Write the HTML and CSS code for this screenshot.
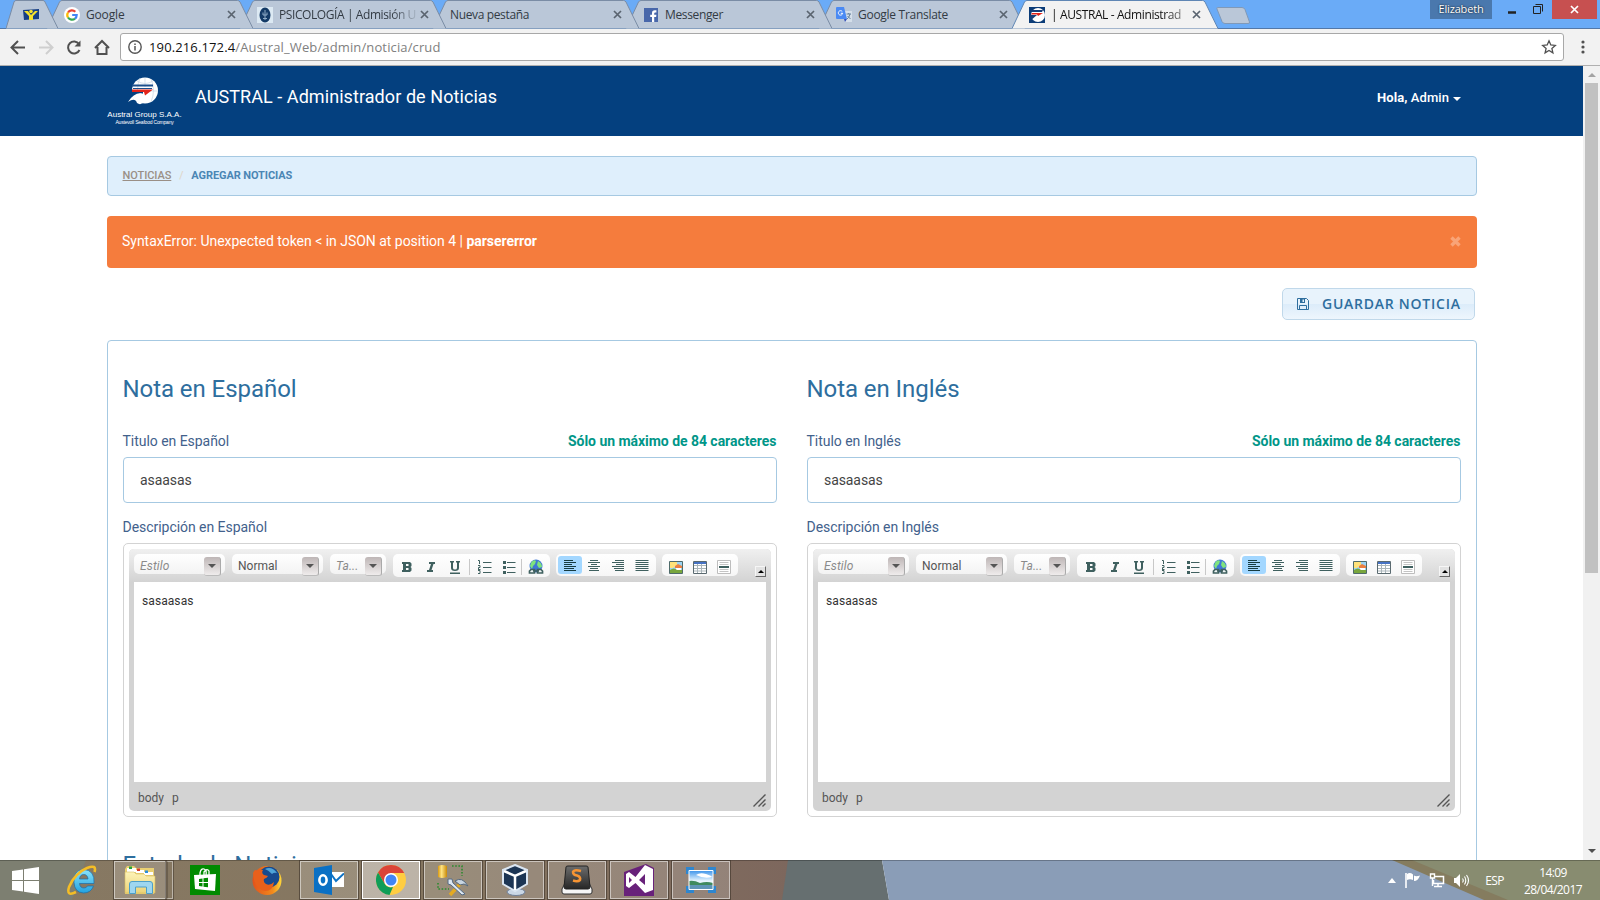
FILE: index.html
```html
<!DOCTYPE html>
<html lang="es">
<head>
<meta charset="utf-8">
<title>AUSTRAL - Administrador de Noticias</title>
<link rel="stylesheet" href="styles.css">
</head>
<body>
<svg class="defs" width="0" height="0">
  <defs>
    <linearGradient id="gold" x1="0" x2="1" y1="0" y2="0"><stop offset="0" stop-color="#d99a12"/><stop offset=".4" stop-color="#ffe483"/><stop offset="1" stop-color="#c98a08"/></linearGradient>
    <linearGradient id="iegrad" x1="0" x2="0" y1="0" y2="1"><stop offset="0" stop-color="#8be4fb"/><stop offset="1" stop-color="#22a2e0"/></linearGradient>
    <linearGradient id="folder" x1="0" x2="0" y1="0" y2="1"><stop offset="0" stop-color="#fdf3b8"/><stop offset="1" stop-color="#ecd377"/></linearGradient>
    <linearGradient id="sky" x1="0" x2="0" y1="0" y2="1"><stop offset="0" stop-color="#3b93ea"/><stop offset=".55" stop-color="#e8f5fd"/><stop offset="1" stop-color="#e8f5fd"/></linearGradient>
    <linearGradient id="key" x1="0" x2="0" y1="0" y2="1"><stop offset="0" stop-color="#6d6d6d"/><stop offset="1" stop-color="#262626"/></linearGradient>
    <linearGradient id="fox" x1="0" x2="1" y1="0" y2="0"><stop offset="0" stop-color="#e2521b"/><stop offset=".7" stop-color="#f28a1c"/><stop offset="1" stop-color="#ffd83b"/></linearGradient>
  </defs>
  <symbol id="tabshape" viewBox="0 0 206 29" preserveAspectRatio="none"><path d="M0 28.5L12.5 2Q13.5 .5 15 .5H190.500Q192 .5 193 2L206 28.500" /></symbol>
  <symbol id="x" viewBox="0 0 9 9"><path d="M1 1L8 8M8 1L1 8" stroke="#5a6470" stroke-width="1.7" fill="none"/></symbol>
  <symbol id="i-b" viewBox="0 0 16 16"><path fill="#3f605f" fill-rule="evenodd" d="M3 3H11L12.500 4.500V7L11.500 8L12.500 9V11.500L11 13H3V11H4V5H3ZM7 5V7H9.500V5ZM7 9V11H9.500V9Z"/></symbol>
  <symbol id="i-i" viewBox="0 0 16 16"><path fill="#3f605f" d="M6 3H12V5H10.500L8.500 11H10V13H4V11H6L8 5H6Z"/></symbol>
  <symbol id="i-u" viewBox="0 0 16 16"><path fill="#3f605f" d="M3 2H7V3.500H6V9Q6 10.500 8 10.500T10 9V3.500H9V2H13V3.500H12V9Q12 12 8 12T4 9V3.500H3ZM3 13.500H13V15H3Z"/></symbol>
  <symbol id="i-ol" viewBox="0 0 16 16"><path d="M7 3.500H15.500M7 8.500H15.500M7 13.500H15.500M2 1.500H3.500V5M2 6.500H4V8.500H2.500V10.500M2 11.500H4V14.500H2M4.500 10.500H2" stroke="#3f605f" fill="none"/></symbol>
  <symbol id="i-ul" viewBox="0 0 16 16"><path d="M7 3.500H15.500M7 8.500H15.500M7 13.500H15.500" stroke="#3f605f"/><path fill="#3f605f" d="M3 2H6V5H3ZM3 7H6V10H3ZM3 12H6V15H3Z"/></symbol>
  <symbol id="i-link" viewBox="0 0 16 16"><circle cx="8" cy="7" r="6.500" fill="#3f78d6"/><path fill="#7fe37d" d="M3.500 3Q6 0 8 2L7 5L5 7L4 10L2 7ZM10 2Q14 4 14 8L11 9L9 6Z"/><path d="M3 10.500H6.500V14H1.500V12ZM9.500 10.500H13L14.500 12V14H9.500ZM5 12H11" fill="#eef4f4" stroke="#3f605f" stroke-width="1.700"/></symbol>
  <symbol id="i-al" viewBox="0 0 16 16"><path d="M2 3.500H11M2 5.500H14M2 7.500H10M2 9.500H14M2 11.500H12M2 13.500H14" stroke="currentColor"/></symbol>
  <symbol id="i-ac" viewBox="0 0 16 16"><path d="M4 3.500H12M2 5.500H14M5 7.500H11M2 9.500H14M4 11.500H12M3 13.500H13" stroke="currentColor"/></symbol>
  <symbol id="i-ar" viewBox="0 0 16 16"><path d="M5 3.500H14M2 5.500H14M6 7.500H14M2 9.500H14M4 11.500H14M5 13.500H14" stroke="currentColor"/></symbol>
  <symbol id="i-aj" viewBox="0 0 16 16"><path d="M1.500 3.500H14.500M1.500 5.500H14.500M1.500 7.500H14.500M1.500 9.500H14.500M1.500 11.500H14.500M1.500 13.500H14.500" stroke="currentColor"/></symbol>
  <symbol id="i-img" viewBox="0 0 16 16"><path fill="#9cd4f3" stroke="#4f6b6a" d="M1.500 2.500H14.500V14.500H1.500Z"/><path fill="#ffe27a" d="M2 3H9V6L5 9H2Z"/><path fill="#eb8040" d="M7 7L10 5L14 7V9H7Z"/><path fill="#fff" d="M8 9H13V11H8Z"/><path fill="#78a63d" d="M2 11Q6 8 9 11H14V14H2Z"/></symbol>
  <symbol id="i-tab" viewBox="0 0 16 16"><path fill="#fff" stroke="#5a6a70" d="M1.500 2.500H14.500V14.500H1.500Z"/><path d="M2 6.500H14M2 9.500H14M2 12H14M5.500 5V14M9.500 5V14" stroke="#aab5ba"/><path fill="#4672c4" d="M2 3H14V5H2Z"/></symbol>
  <symbol id="i-hr" viewBox="0 0 16 16"><path fill="#fff" stroke="#bdbdbd" d="M1.500 1.500H14.500V14.500H1.500Z"/><path d="M3.500 3.500H12.500M3.500 5.500H12.500M3.500 10.500H12.500M3.500 12.500H12.500" stroke="#c4c4c4"/><path d="M3 8H13" stroke="#3f605f" stroke-width="2"/></symbol>
  <symbol id="austral" viewBox="0 0 32 30"><circle cx="18" cy="13.500" r="13" fill="#fff"/><path d="M18 1V10M10 4Q18 9 26 4M5 14H31M13 1Q8 13 13 26M24 2Q29 13 24 25" stroke="#c9d6e4" stroke-width=".7" fill="none"/><path fill="#04407f" d="M0 0H5L5 20L0 24Z"/><path fill="#1c4f8c" d="M5 7.500H26V9.500H5ZM6 11H25V12H6Z"/><path fill="#e2231a" d="M5 12.500H26L18 18.500L17 15H5Z"/><path fill="#04407f" d="M4 15H16V17Q11 15 7 21L1 24L5 18H4Z"/><path fill="#fff" d="M1 25Q8 14 17 17Q13 20 18 24Q14 29 10 26Q8 20 1 25Z"/></symbol>
</svg>

<div class="browser">
  <div class="tabs">
    <div class="tab pinned t1"><svg class="shape" viewBox="0 0 52 29"><path d="M0 28.500L8 2Q8.500 .5 10 .5H37Q38.500 .5 39 2L52 28.500"/></svg>
      <svg class="fav" viewBox="0 0 16 16"><path fill="#173f86" d="M0 3L16 2V12L1 13Z"/><path fill="#f5e12c" d="M1 4L5 4L8 8L12 4L15 4L10 9V13H6V9Z"/><circle cx="8" cy="4.500" r="1.800" fill="#f5e12c"/></svg></div>
    <div class="tab t2"><svg class="shape"><use href="#tabshape"/></svg>
      <svg class="fav" viewBox="0 0 16 16"><circle cx="8" cy="8" r="8" fill="#fff"/><g fill="none" stroke-width="2.200"><path stroke="#ea4335" d="M4 5.500A4.700 4.700 0 0 1 11.300 4.700"/><path stroke="#fbbc05" d="M4 5.500A4.700 4.700 0 0 0 4 10.500"/><path stroke="#34a853" d="M4 10.500A4.700 4.700 0 0 0 11 11.600"/><path stroke="#4285f4" d="M11 11.600Q12.700 10.300 12.700 8H8.200"/></g></svg>
      <span class="title s1">Google</span><svg class="close"><use href="#x"/></svg></div>
    <div class="tab t3"><svg class="shape"><use href="#tabshape"/></svg>
      <svg class="fav" viewBox="0 0 16 16"><path fill="#dce9f3" d="M0 0H16V16H0Z"/><ellipse cx="8" cy="8" rx="5.500" ry="7.500" fill="#143a66"/><path d="M8 3V13M6 5.500V8H10V5.500M6 11.500H10" stroke="#8fabc6" fill="none"/></svg>
      <span class="title s2">PSICOLOGÍA | Admisión U</span><svg class="close"><use href="#x"/></svg></div>
    <div class="tab t4"><svg class="shape"><use href="#tabshape"/></svg>
      <span class="title s3">Nueva pestaña</span><svg class="close"><use href="#x"/></svg></div>
    <div class="tab t5"><svg class="shape"><use href="#tabshape"/></svg>
      <svg class="fav" viewBox="0 0 16 16"><path fill="#4867aa" d="M1 1H15V15H1Z"/><path fill="#fff" d="M9 15V10H7.200V7.800H9V6Q9 3.300 11.800 3.300H13.400V5.500H12.300Q11.200 5.500 11.200 6.600V7.800H13.400L13.100 10H11.200V15Z"/></svg>
      <span class="title s3">Messenger</span><svg class="close"><use href="#x"/></svg></div>
    <div class="tab t6"><svg class="shape"><use href="#tabshape"/></svg>
      <svg class="fav" viewBox="0 0 16 16"><path fill="#d5dfea" d="M7 4H16V15H9Z"/><path fill="#4a8af4" d="M1 0H8L11 12H1Q0 12 0 11V1Q0 0 1 0Z"/><path fill="#3550b8" d="M8 12H11L9 15Z"/><path d="M6.300 4.600A2.200 2.200 0 1 0 6.700 6.300H4.800" stroke="#fff" fill="none"/><path d="M10.500 7H15M12.700 6V7M14 7Q13 11 11 12M11.500 9L14.500 12" stroke="#65829c" fill="none"/></svg>
      <span class="title s4">Google Translate</span><svg class="close"><use href="#x"/></svg></div>
    <div class="tab active"><svg class="shape"><use href="#tabshape"/></svg>
      <svg class="fav" viewBox="0 0 16 16"><path fill="#0b3c78" d="M0 0H16V16H0Z"/><circle cx="9" cy="8" r="7" fill="#fff"/><path fill="#173f7a" d="M2 3H14L13 5H2ZM1 8H8L1 14Z"/><path fill="#e2231a" d="M3 6H14L9 9L8 7.500H2Z"/></svg>
      <span class="title s5">| AUSTRAL - Administrad</span><svg class="close"><use href="#x"/></svg></div>
    <svg class="newtab" viewBox="0 0 36 20"><path d="M1.500 .5H26Q28 .5 29 2.500L33.500 15Q34 16.500 32 16.500H9Q7 16.500 6 14.500L1 2Q.5 .5 1.500 .5Z" fill="#bac7d8" stroke="#8099b8"/></svg>
    <div class="winctl">
      <span class="user">Elizabeth</span>
      <svg class="wc" viewBox="0 0 60 19"><path d="M16 12.500H24" stroke="#222" stroke-width="2.500"/><path d="M41.500 6.500H48.500V13.500H41.500ZM43.500 4.500H50.500V11.500" fill="none" stroke="#222"/></svg>
      <span class="wx"><svg width="9" height="9" viewBox="0 0 9 9"><path d="M1 1L8 8M8 1L1 8" stroke="#fff" stroke-width="1.700"/></svg></span>
    </div>
  </div>
  <div class="toolbar">
    <svg class="nav" viewBox="0 0 118 37"><g fill="none" stroke-width="2"><path d="M25 18.500H12M18 12L11.500 18.500L18 25" stroke="#505050"/><path d="M39 18.500H52M46 12L52.500 18.500L46 25" stroke="#cfcfcf"/><path d="M79 15A6 6 0 1 0 79.500 21" stroke="#505050"/><path d="M95 19L102 12L109 19M97.500 18V25H106.500V18" stroke="#505050"/></g><path d="M80.500 11.500V17.500H74.500Z" fill="#505050"/></svg>
    <div class="omni">
      <svg width="16" height="16" viewBox="0 0 16 16"><circle cx="8" cy="8" r="6.200" fill="none" stroke="#555" stroke-width="1.400"/><path d="M8 7V11.500M8 4.500V6" stroke="#555" stroke-width="1.500"/></svg>
      <span class="url"><b>190.216.172.4</b>/Austral_Web/admin/noticia/crud</span>
      <svg class="star" width="16" height="16" viewBox="0 0 16 16"><path d="M8 1.800L9.800 6L14.300 6.400L10.900 9.400L11.900 13.800L8 11.500L4.100 13.800L5.100 9.400L1.700 6.400L6.200 6Z" fill="none" stroke="#505050" stroke-width="1.300"/></svg>
    </div>
    <svg class="dots" width="6" height="16" viewBox="0 0 6 16"><circle cx="3" cy="3" r="1.600"/><circle cx="3" cy="8" r="1.600"/><circle cx="3" cy="13" r="1.600"/></svg>
  </div>
</div>

<div class="view">
  <div class="page">
    <header class="top">
      <div class="logo"><svg width="32" height="30"><use href="#austral"/></svg><span class="l1">Austral Group S.A.A.</span><span class="l2">Austevoll Seafood Company</span></div>
      <span class="brand">AUSTRAL - Administrador de Noticias</span>
      <span class="hola"><span><b>Hola,</b> Admin</span><i class="caret"></i></span>
    </header>
    <main>
      <nav class="crumb"><a>NOTICIAS</a><i>/</i><b>AGREGAR NOTICIAS</b></nav>
      <div class="alert"><span>SyntaxError: Unexpected token &lt; in JSON at position 4 | <b>parsererror</b></span><svg width="11" height="11" viewBox="0 0 11 11"><path d="M1.500 1.500L9.500 9.500M9.500 1.500L1.500 9.500" stroke="#f9a477" stroke-width="3.400"/></svg></div>
      <div class="actions"><button class="save"><svg width="12" height="12" viewBox="0 0 12 12"><path d="M.5 .5H9.500L11.500 2.500V11.500H.5ZM2.500 11V7.500H9.500V11" fill="none" stroke="#2e6e9e"/><path d="M3 1H8V5H3Z" fill="#2e6e9e"/><path d="M5.500 1.500H7V4H5.500Z" fill="#e4f1fb"/></svg><span>GUARDAR NOTICIA</span></button></div>
      <section class="panel">
        <div class="cols">
          <div class="col">
            <h2>Nota en Español</h2>
            <div class="lab"><span>Titulo en Español</span><b>Sólo un máximo de 84 caracteres</b></div>
            <div class="input">asaasas</div>
            <div class="lab lab2"><span>Descripción en Español</span></div>
            <div class="editor"><div class="ck">
              <div class="bar">
                <div class="combo"><em>Estilo</em><i></i></div>
                <div class="combo"><span>Normal</span><i></i></div>
                <div class="combo small"><em>Ta...</em><i></i></div>
                <div class="group g1"><svg><use href="#i-b"/></svg><svg><use href="#i-i"/></svg><svg><use href="#i-u"/></svg><u></u><svg><use href="#i-ol"/></svg><svg><use href="#i-ul"/></svg><u></u><svg><use href="#i-link"/></svg></div>
                <div class="group g2"><svg class="on"><use href="#i-al"/></svg><svg><use href="#i-ac"/></svg><svg><use href="#i-ar"/></svg><svg><use href="#i-aj"/></svg></div>
                <div class="group g3"><svg><use href="#i-img"/></svg><svg><use href="#i-tab"/></svg><svg><use href="#i-hr"/></svg></div>
                <span class="fold"><i></i></span>
              </div>
              <div class="doc">sasaasas</div>
              <div class="path"><span>body</span><span>p</span><svg width="13" height="13" viewBox="0 0 13 13"><path d="M.5 12.500L12.500 .5M5.500 12.500L12.500 5.500M9.500 12.500L12.500 9.500" stroke="#555" stroke-width="1.400"/></svg></div>
            </div></div>
            <h2 class="next">Estado de Noticia</h2>
          </div>
          <div class="col">
            <h2>Nota en Inglés</h2>
            <div class="lab"><span>Titulo en Inglés</span><b>Sólo un máximo de 84 caracteres</b></div>
            <div class="input">sasaasas</div>
            <div class="lab lab2"><span>Descripción en Inglés</span></div>
            <div class="editor"><div class="ck">
              <div class="bar">
                <div class="combo"><em>Estilo</em><i></i></div>
                <div class="combo"><span>Normal</span><i></i></div>
                <div class="combo small"><em>Ta...</em><i></i></div>
                <div class="group g1"><svg><use href="#i-b"/></svg><svg><use href="#i-i"/></svg><svg><use href="#i-u"/></svg><u></u><svg><use href="#i-ol"/></svg><svg><use href="#i-ul"/></svg><u></u><svg><use href="#i-link"/></svg></div>
                <div class="group g2"><svg class="on"><use href="#i-al"/></svg><svg><use href="#i-ac"/></svg><svg><use href="#i-ar"/></svg><svg><use href="#i-aj"/></svg></div>
                <div class="group g3"><svg><use href="#i-img"/></svg><svg><use href="#i-tab"/></svg><svg><use href="#i-hr"/></svg></div>
                <span class="fold"><i></i></span>
              </div>
              <div class="doc">sasaasas</div>
              <div class="path"><span>body</span><span>p</span><svg width="13" height="13" viewBox="0 0 13 13"><path d="M.5 12.500L12.500 .5M5.500 12.500L12.500 5.500M9.500 12.500L12.500 9.500" stroke="#555" stroke-width="1.400"/></svg></div>
            </div></div>
          </div>
        </div>
      </section>
    </main>
  </div>
  <div class="scroll"><i class="up"></i><div class="thumb"></div><i class="down"></i></div>
</div>

<footer class="taskbar">
  <svg class="wall" viewBox="0 0 1600 40" preserveAspectRatio="none">
    <defs><linearGradient id="wl" x1="0" x2="1" y1="0" y2="0"><stop offset="0" stop-color="#877963"/><stop offset=".55" stop-color="#857660"/><stop offset="1" stop-color="#7d675d"/></linearGradient></defs>
    <path fill="url(#wl)" d="M0 0H790V40H0Z"/><path fill="#7d7f71" d="M0 0H86L72 40H0Z"/><path fill="#666f70" d="M788 0H882L889 40H782Z"/><path fill="#8a9db7" d="M882 0H1600V40H889Z"/><path fill="#857c5f" d="M1392 0H1430L1520 40H1484Z"/><path fill="#888c70" d="M1412 0H1600V40H1508Z"/><path d="M0 .5H1600" stroke="#000" stroke-opacity=".25"/></svg>
  <div class="tb win"><svg width="28" height="27" viewBox="0 0 28 27"><path fill="#fff" d="M0 4L11 2.400V13H0ZM12 2.200L27 0V13H12ZM0 14H11V24.600L0 23ZM12 14H27V27L12 24.800Z"/></svg></div>
  <div class="tb ie"><svg width="32" height="32" viewBox="0 0 32 32"><path d="M8 18.500Q7 6 17.500 5.500Q29 6 28 19.500H13.500Q14 24 18 24Q20.500 24 21.500 22H27.500Q25 29 17.500 29Q8.500 28.500 8 18.500ZM13.500 15H22Q21.500 10.500 17.800 10.500Q14 10.500 13.500 15Z" fill="url(#iegrad)" stroke="#1b6fa8" stroke-width=".7" fill-rule="evenodd"/><path d="M28.500 8Q31 0 21 4Q9 9 3 23Q0 33 10 28" fill="none" stroke="#f4bd26" stroke-width="2.600"/></svg></div>
  <div class="tb btn exp"><svg width="32" height="32" viewBox="0 0 32 32"><path fill="#e9cf72" d="M1 5L3 2H10L12 4H30V30H1Z"/><path fill="#fff" d="M3 4H12V8H3ZM12 6H20V9H12ZM20 8H29V11H20Z"/><path fill="#27a33a" d="M5 2.500H8V5H5Z"/><path fill="#d33b2a" d="M13 4.500H16V7H13Z"/><path fill="#2b8fd8" d="M21 6.500H24V9H21Z"/><path fill="url(#folder)" stroke="#d9bd5f" stroke-width=".6" d="M1 8H10L12 10H20L22 12H31V29H1Z"/><path fill="#9ed6ef" stroke="#4d9fc8" d="M5.500 29.500V20Q5.500 17.500 8 17.500H26Q28.500 17.500 28.500 20V29.500H22.500V23H11.500V29.500Z"/></svg></div>
  <div class="stack"></div>
  <div class="tb store"><svg width="30" height="30" viewBox="0 0 30 30"><path fill="#008a00" d="M0 0H30V30H0Z"/><path d="M10 11V8Q11 3 14 4Q17 5 16 10M14 10V7Q17 3 19 6V10" fill="none" stroke="#fff" stroke-width="1.300"/><path fill="#fff" d="M4 10L26 9L25 26L5 24Z"/><path fill="#008a00" d="M9 14L12.500 13.500V17H9ZM13.500 13.300L18 12.800V17H13.500ZM9 18H12.500V21.500L9 21ZM13.500 18H18V22.300L13.500 21.700Z"/></svg></div>
  <div class="tb ff"><svg width="30" height="31" viewBox="0 0 30 31"><circle cx="15" cy="15.500" r="14.500" fill="url(#fox)"/><circle cx="17" cy="12" r="10.500" fill="#184a8e"/><path fill="#4ea4d9" d="M13 4Q20 1 25 8Q22 7 20 9Q16 5 13 4Z"/><path fill="#e8601b" d="M1 8Q3 3 5 6Q8 4 11 5Q9 8 12 10L16 11Q15 13 12 14Q11 17 14 19Q18 21 22 17Q21 26 13 26Q2 24 1 8Z"/></svg></div>
  <div class="tb btn outl"><svg width="30" height="30" viewBox="0 0 30 30"><path fill="#fff" d="M16 7H30V22H16Z"/><path d="M17 9L22 16L30 8.500" fill="none" stroke="#0d72c5" stroke-width="2"/><path fill="#0a70c4" d="M0 3L18 0V30L0 27Z"/><ellipse cx="9" cy="15" rx="3.600" ry="4.700" fill="none" stroke="#fff" stroke-width="2.600"/></svg></div>
  <div class="tb btn cur"><svg width="30" height="30" viewBox="0 0 30 30"><circle cx="15" cy="15" r="15" fill="#ffcd41"/><path fill="#db4437" d="M2 7.500A15 15 0 0 1 28.200 8H15L8.500 18.500Z"/><path fill="#0f9d58" d="M2 7.500L8.500 18.500A7 7 0 0 0 17 22L13.500 30A15 15 0 0 1 2 7.500Z"/><circle cx="15" cy="15" r="7" fill="#fff"/><circle cx="15" cy="15" r="5.500" fill="#4285f4"/></svg></div>
  <div class="tb btn"><svg width="32" height="32" viewBox="0 0 32 32"><path fill="url(#gold)" d="M1 2Q5 0 10 2V13Q5 15 1 13Z"/><path d="M15 2H25V12M1 19V25H12" fill="none" stroke="#2c8a2e" stroke-width="1.600" stroke-dasharray="1.600 1.600"/><path d="M13 31L24 19" stroke="#e4aa22" stroke-width="3.500"/><path d="M18 17Q25 12 31 22L27 20L23 21Z" fill="#c8d5e2" stroke="#55687c"/><path d="M11 15L15 15L16 19L28 30L25 31L14 21L11 20Z" fill="#dce7f1" stroke="#566b84"/></svg></div>
  <div class="tb btn"><svg width="28" height="32" viewBox="0 0 28 32"><ellipse cx="15" cy="28" rx="9" ry="3.500" fill="#cad7e6" stroke="#6f8099"/><path d="M14 1L26 6V20L14 27L2 20V6Z" fill="#1c3554" stroke="#dbe6f2" stroke-width="2"/><path d="M3 7L14 12L25 7M14 12V26" fill="none" stroke="#fff" stroke-width="2.500"/></svg></div>
  <div class="tb btn"><svg width="32" height="30" viewBox="0 0 32 30"><path fill="#f6f6f6" stroke="#333" d="M5 16L1 24V27Q1 29 3 29H29Q31 29 31 27V24L27 16Z"/><path fill="url(#key)" stroke="#222" d="M5 2Q5 1 7 1H25Q27 1 27 2L29 22Q29 24 27 24H5Q3 24 3 22Z"/><path d="M20 6Q13 4 12 7Q12 10 16 10.500Q20 12 19 15Q17 17 12 15.500" fill="none" stroke="#f79433" stroke-width="2.500"/></svg></div>
  <div class="tb btn"><svg width="30" height="32" viewBox="0 0 30 32"><path fill="#68217a" d="M0 8L22 0L30 4V32H0Z"/><path fill="#fff" fill-rule="evenodd" d="M21 1L29 5V26L21 29L11.500 19L5 24L2 22V10L5 8L11.500 13ZM21 10L15 16L21 21ZM5 13V19L8 16Z"/></svg></div>
  <div class="tb btn"><svg width="30" height="26" viewBox="0 0 30 26"><path d="M1.500 7V1.500H8M22 1.500H28.500V7M28.500 19V24.500H22M8 24.500H1.500V19" fill="none" stroke="#2e86cf" stroke-width="3"/><path fill="url(#sky)" d="M3 3.500H27V22.500H3Z"/><path fill="#5f95b6" d="M3 17H27V22.500H3Z"/><path fill="#3f8a5e" d="M3 14Q8 13 14 16Q21 14 27 16V18H3Z"/><path fill="#fff" d="M10 8Q14 5 20 7T26 10Q18 12 10 8Z"/><path fill="none" stroke="#fff" d="M3 3.500H27V22.500H3Z"/></svg></div>
  <div class="tray">
    <svg width="8" height="5" viewBox="0 0 8 5"><path d="M0 5L4 0L8 5Z" fill="#fff"/></svg>
    <svg width="17" height="16" viewBox="0 0 17 16"><path d="M2 1V16" stroke="#fff" stroke-width="1.600"/><path fill="#fff" d="M3 2Q6 0 9 2.500V8Q6 6.500 3 8ZM10 3.500Q12 5 16 3.500Q14 9 10 9Z"/></svg>
    <svg width="16" height="15" viewBox="0 0 16 15"><path d="M6 3.500H14.500V10.500H4.500V7M9 11V13M5 13.500H13" fill="none" stroke="#fff" stroke-width="1.500"/><path d="M1.500 1H5.500V5H1.500ZM3.500 5V13" fill="none" stroke="#fff" stroke-width="1.400"/></svg>
    <svg width="17" height="15" viewBox="0 0 17 15"><path fill="#fff" d="M1 5H3L7 1V14L3 10H1Z"/><path d="M9.500 5.500Q11 7.500 9.500 9.500M11.500 3.500Q14 7.500 11.500 11.500M13.500 2Q17.500 7.500 13.500 13" fill="none" stroke="#fff" stroke-width="1.100"/></svg>
  </div>
  <span class="lang">ESP</span>
  <div class="clock"><span>14:09</span><span>28/04/2017</span></div>
</footer>
</body>
</html>
```
FILE: styles.css
```css
* { box-sizing: border-box; }
body { margin: 0; width: 1600px; height: 900px; overflow: hidden; display: flex; flex-direction: column; font-family: Roboto, sans-serif; background: #fff; }
.defs { position: absolute; }
svg { display: block; flex: none; }

.browser { height: 66px; flex: none; background: #f2f2f2; border-bottom: 1px solid #b0b0b0; font-family: "Open Sans", sans-serif; }
.tabs { height: 29px; background: #6aabf7; border-bottom: 1px solid #5378a8; display: flex; align-items: flex-start; padding-left: 6px; }
.tab { position: relative; isolation: isolate; width: 206px; height: 29px; margin-left: -13px; padding: 0 17px; display: flex; align-items: center; font-size: 12px; color: #333b44; flex: none; }
.tab .shape { position: absolute; left: 0; top: 0; width: 100%; height: 29px; fill: #bac7d8; stroke: #7a8ca5; z-index: -1; }
.t1 { z-index: 6; } .t2 { z-index: 5; } .t3 { z-index: 4; } .t4 { z-index: 3; } .t5 { z-index: 2; } .t6 { z-index: 1; }
.tab.pinned { width: 52px; margin-left: 0; }
.tab.t2 { margin-left: -11px; }
.tab.active { z-index: 8; color: #111; }
.tab.active .shape { fill: #f2f2f2; stroke: #5f86b4; }
.fav { width: 16px; height: 16px; margin-right: 6px; }
.title { flex: 1; overflow: hidden; white-space: nowrap; }
.s1 { letter-spacing: -.16px; }
.s2 { letter-spacing: -.41px; -webkit-mask-image: linear-gradient(90deg, #000 80%, transparent); }
.s3 { letter-spacing: -.36px; }
.s4 { letter-spacing: -.28px; }
.s5 { letter-spacing: -.39px; -webkit-mask-image: linear-gradient(90deg, #000 80%, rgba(0,0,0,.2)); }
.close { width: 9px; height: 9px; }
.newtab { width: 36px; height: 20px; margin: 7px 0 0 -2px; }
.winctl { display: flex; margin: 0 3px 0 auto; height: 19px; }
.user { width: 62px; background: #4a78ad; color: #fff; font-size: 11px; line-height: 18px; letter-spacing: -.17px; text-align: center; text-shadow: 0 0 2px #000; }
.wc { width: 60px; height: 19px; }
.wx { width: 45px; background: #c75050; display: flex; align-items: center; justify-content: center; }
.toolbar { height: 36px; display: flex; align-items: center; }
.nav { width: 118px; height: 37px; }
.omni { margin-left: 2px; width: 1444px; height: 28px; background: #fff; border: 1px solid #a8a8a8; border-radius: 3px; display: flex; align-items: center; padding: 0 6px; }
.url { margin-left: 6px; font-size: 13px; letter-spacing: .13px; color: #808080; white-space: nowrap; }
.url b { font-weight: 400; color: #111; }
.star { margin-left: auto; }
.dots { margin-left: 16px; fill: #505050; }

.view { flex: 1; min-height: 0; display: flex; overflow: hidden; }
.page { width: 1583px; height: 794px; overflow: hidden; }
.top { height: 70px; background: #04407f; color: #fff; display: flex; padding: 0 122px 0 107px; }
.logo { width: 75px; display: flex; flex-direction: column; align-items: center; padding-top: 11px; font-family: "Liberation Sans", sans-serif; white-space: nowrap; }
.logo svg { margin-right: 4px; }
.logo .l1 { font-size: 8px; line-height: 9px; margin-top: 3px; }
.logo .l2 { font-size: 5px; line-height: 6px; letter-spacing: -.2px; }
.brand { font-size: 18px; line-height: 61px; margin-left: 13px; letter-spacing: .07px; white-space: nowrap; }
.hola { margin-left: auto; font-size: 13px; font-weight: 500; line-height: 64px; height: 64px; display: flex; align-items: center; letter-spacing: .07px; }
.caret { border: 4px solid transparent; border-top-color: #fff; border-bottom: 0; margin: 2px 0 0 4px; }
main { width: 1370px; margin: 20px 0 0 107px; }
.crumb { height: 40px; border: 1px solid #a6c9e2; border-radius: 4px; background: #dfeffc; display: flex; padding-left: 14.5px; font-size: 11px; line-height: 37px; letter-spacing: -.06px; color: #9a8f86; font-weight: 500; }
.crumb a { text-decoration: underline; }
.crumb i { width: 20px; text-align: center; font-style: normal; color: #e0d8cc; }
.crumb b { color: #4b86b4; font-weight: 700; letter-spacing: -.09px; }
.alert { margin-top: 20px; height: 52px; background: #f57c3d; border-radius: 4px; color: #fff; font-size: 14px; line-height: 50px; letter-spacing: -.025px; padding: 0 16px 0 15px; display: flex; justify-content: space-between; }
.alert svg { margin-top: 20px; }
.actions { display: flex; justify-content: flex-end; margin-top: 20px; padding-right: 2px; }
.save { width: 193px; height: 32px; margin: 0; border: 1px solid #c0d8ea; border-radius: 5px; background: linear-gradient(#e8f3fc 0 50%, #dcecfa 51%, #eef6fd); display: flex; align-items: center; padding: 0 0 1px 14px; gap: 13px; font: 600 14px "Open Sans", sans-serif; letter-spacing: .75px; color: #2e6e9e; white-space: nowrap; }
.panel { margin-top: 20px; height: 600px; border: 1px solid #a6c9e2; border-radius: 4px; padding: 0 15px; }
.cols { display: flex; gap: 30px; }
.col { width: 654px; }
h2 { margin: 35px 0 0 -.5px; font-size: 24px; font-weight: 400; line-height: 26px; letter-spacing: -.06px; color: #2e6e9e; white-space: nowrap; }
.lab { display: flex; justify-content: space-between; margin: 29px .5px 0 -.5px; font-size: 14px; line-height: 20px; height: 20px; letter-spacing: -.04px; color: #42618c; }
.lab b { color: #009688; }
.input { margin-top: 6px; height: 46px; border: 1px solid #a6c9e2; border-radius: 4px; padding-left: 16px; font-size: 14px; line-height: 44px; letter-spacing: -.08px; color: #444; }
.lab2 { margin-top: 14px; }
.editor { margin-top: 6px; height: 274px; border: 1px solid #d3d3d3; border-radius: 5px; padding: 5px; }
.ck { height: 262px; background: #d3d3d3; border-radius: 5px; padding: 0 5px; display: flex; flex-direction: column; }
.bar { height: 33px; margin: 0 -5px; padding: 5px 5px 0; display: flex; background: linear-gradient(#f0f0f0, #d3d3d3); border-radius: 5px 5px 0 0; }
.combo { width: 91px; height: 20px; margin-right: 7px; border-radius: 5px; background: linear-gradient(#fff, #f3f3f3); display: flex; justify-content: space-between; padding: 0 4px 0 6px; font-size: 12px; line-height: 24px; color: #555; }
.combo.small { width: 56px; }
.combo em { color: #8a8a8a; letter-spacing: .13px; }
.combo i { width: 17px; height: 19px; margin-top: 3px; border-radius: 3px; background: linear-gradient(#beb6b6, #efecec); border-right: 1px solid #aaa; border-bottom: 1px solid #bbb; display: flex; justify-content: center; align-items: center; }
.combo i::after { content: ""; border: 4px solid transparent; border-top-color: #555; border-bottom: 0; }
.group { height: 22px; border-radius: 5px; background: linear-gradient(#fff, #f6f6f6); display: flex; padding: 2px; margin-right: 6px; color: #3f605f; }
.group svg { width: 24px; height: 18px; padding: 1px 4px; border-radius: 3px; }
.group.g1 { height: 23px; }
.group.g1 svg { padding-top: 3px; height: 20px; overflow: visible; }
.group svg.on { background: #a3d7ff; color: #163b40; }
.group u { width: 1px; height: 16px; margin: 3px 2px 0 1.5px; background: #c8c8c8; }
.g3 { margin-right: 0; }
.g3 svg { height: 20px; padding-top: 3px; }
.fold { width: 11px; height: 11px; margin: 12px 0 0 auto; background: #e2e2e2; border: 1px solid #f6f6f6; border-right-color: #666; border-bottom-color: #666; display: flex; align-items: center; justify-content: center; }
.fold i { border: 3px solid transparent; border-bottom-color: #000; border-top: 0; }
.doc { height: 200px; background: #fff; padding: 9px 8px; font-size: 12px; line-height: 20px; letter-spacing: .08px; color: #333; }
.path { height: 29px; display: flex; padding: 0 0 0 4px; gap: 8px; font-size: 12px; line-height: 32px; color: #555; }
.path svg { margin: 12px 0 0 auto; }
.next { margin-top: 35px; }
.scroll { width: 17px; background: #f1f1f1; display: flex; flex-direction: column; align-items: center; }
.up, .down { border: 4px solid transparent; }
.up { border-bottom-color: #a3a3a3; border-top: 0; margin-top: 7px; }
.down { border-top-color: #505050; border-bottom: 0; margin-top: auto; margin-bottom: 7px; }
.thumb { width: 13px; height: 490px; background: #c1c1c1; margin-top: 6px; }

.taskbar { position: relative; height: 40px; flex: none; display: flex; align-items: center; isolation: isolate; }
.wall { position: absolute; left: 0; top: 0; width: 1600px; height: 40px; z-index: -1; }
.tb { display: flex; align-items: center; justify-content: center; }
.win { width: 28px; margin-left: 12px; }
.ie { width: 32px; margin: 0 14px 0 26px; }
.btn { width: 58px; height: 38px; margin-right: 4px; background: rgba(255,255,255,.17); border: 1px solid rgba(255,255,255,.5); outline: 1px solid rgba(60,50,40,.6); }
.cur { background: rgba(255,255,255,.45); border-color: #fff; }
.exp { width: 52px; margin-right: 0; margin-left: 2px; }
.stack { width: 7px; height: 38px; border: 1px solid rgba(255,255,255,.45); border-left: 2px solid #6b5f4e; margin-right: 17px; outline: 1px solid rgba(60,50,40,.5); }
.store { width: 30px; }
.ff { width: 30px; margin: 0 18px 0 32px; }
.tray { display: flex; align-items: center; margin-left: auto; gap: 8px; }
.lang, .clock { color: #fff; font: 12px "Open Sans", sans-serif; letter-spacing: -.57px; }
.lang { margin-left: 15px; }
.clock { margin: 0 18px 0 20px; display: flex; flex-direction: column; align-items: center; line-height: 17px; padding-top: 2px; }
```
